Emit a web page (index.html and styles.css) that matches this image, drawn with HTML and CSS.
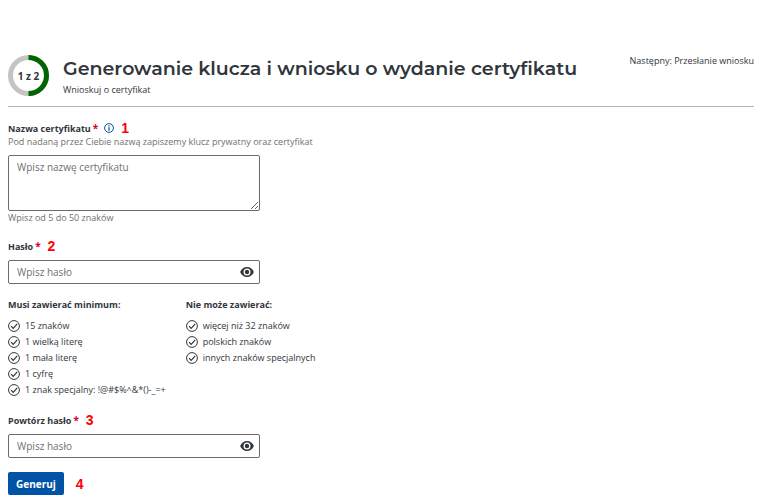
FILE: index.html
```html
<!DOCTYPE html>
<html lang="pl">
<head>
  <meta charset="UTF-8" />
  <meta name="viewport" content="width=device-width, initial-scale=1.0" />
  <title>Wnioskuj o certyfikat</title>
  <link rel="stylesheet" href="styles.css">
</head>
<body>
  <svg class="sprite" aria-hidden="true">
    <symbol id="icon-check" viewBox="0 0 12 12">
      <circle cx="6" cy="6" r="5.4" fill="none" stroke="currentColor" stroke-width="1" />
      <path d="M3 6.200l2.200 2.200 4-4.600" fill="none" stroke="currentColor" stroke-width="1.200" />
    </symbol>
    <symbol id="icon-eye" viewBox="1 1 22 16">
      <path d="M12 1C7 1 2.700 4.300 1 9c1.700 4.700 6 8 11 8s9.300-3.300 11-8c-1.700-4.700-6-8-11-8z" fill="currentColor" />
      <circle cx="12" cy="9" r="5.600" fill="#fff" />
      <circle cx="12" cy="9" r="3.500" fill="currentColor" />
    </symbol>
  </svg>

  <header>
    <div class="progress">
      <svg viewBox="0 0 41 41" aria-hidden="true">
        <circle cx="20.5" cy="20.5" r="18" fill="none" stroke="#c4c4c4" stroke-width="5" />
        <path d="M20.5 2.5a18 18 0 0 1 0 36" fill="none" stroke="#006400" stroke-width="5" />
      </svg>
      <span>1 z 2</span>
    </div>
    <div class="title">
      <h1>Generowanie klucza i wniosku o wydanie certyfikatu</h1>
      <p>Wnioskuj o certyfikat</p>
    </div>
    <p class="next-step">Następny: Przesłanie wniosku</p>
  </header>

  <form>
    <div class="field">
      <div class="label-row">
        <label for="certName">Nazwa certyfikatu<span class="required">*</span></label>
        <svg class="info" viewBox="0 0 10 10" aria-hidden="true">
          <circle cx="5" cy="5" r="4.4" fill="none" stroke="currentColor" stroke-width="1" />
          <path d="M5 2.200v1.200M5 4.300v3.500" stroke="currentColor" stroke-width="1.200" />
        </svg>
        <span class="mark">1</span>
      </div>
      <p class="help">Pod nadaną przez Ciebie nazwą zapiszemy klucz prywatny oraz certyfikat</p>
      <textarea id="certName" placeholder="Wpisz nazwę certyfikatu"></textarea>
      <p class="help">Wpisz od 5 do 50 znaków</p>
    </div>

    <div class="field">
      <div class="label-row">
        <label for="password">Hasło<span class="required">*</span></label>
        <span class="mark">2</span>
      </div>
      <div class="password">
        <input type="password" id="password" placeholder="Wpisz hasło">
        <button type="button" aria-label="Pokaż hasło"><svg><use href="#icon-eye" /></svg></button>
      </div>
    </div>

    <div class="rules">
      <section>
        <h2>Musi zawierać minimum:</h2>
        <ul>
          <li><svg><use href="#icon-check" /></svg>15 znaków</li>
          <li><svg><use href="#icon-check" /></svg>1 wielką literę</li>
          <li><svg><use href="#icon-check" /></svg>1 mała literę</li>
          <li><svg><use href="#icon-check" /></svg>1 cyfrę</li>
          <li><svg><use href="#icon-check" /></svg>1 znak specjalny: !@#$%^&amp;*()-_=+</li>
        </ul>
      </section>
      <section>
        <h2>Nie może zawierać:</h2>
        <ul>
          <li><svg><use href="#icon-check" /></svg>więcej niż 32 znaków</li>
          <li><svg><use href="#icon-check" /></svg>polskich znaków</li>
          <li><svg><use href="#icon-check" /></svg>innych znaków specjalnych</li>
        </ul>
      </section>
    </div>

    <div class="field">
      <div class="label-row">
        <label for="repeatPassword">Powtórz hasło<span class="required">*</span></label>
        <span class="mark">3</span>
      </div>
      <div class="password">
        <input type="password" id="repeatPassword" placeholder="Wpisz hasło">
        <button type="button" aria-label="Pokaż hasło"><svg><use href="#icon-eye" /></svg></button>
      </div>
    </div>

    <div class="actions">
      <button type="submit" class="submit">Generuj</button>
      <span class="mark">4</span>
    </div>
  </form>
</body>
</html>
```

FILE: styles.css
```css
body {
  margin: 0;
  padding: 54px 6px 4px 8px;
  font-family: 'Open Sans', sans-serif;
  font-size: 9px;
  line-height: 14px;
  background-color: #fff;
  color: #30363c;
}

p, h1, h2, ul {
  margin: 0;
  padding: 0;
}

.sprite {
  display: none;
}

header {
  display: flex;
  align-items: flex-start;
  padding-bottom: 9px;
  border-bottom: 1px solid #b4b4b4;
}

.progress {
  display: grid;
  place-items: center;
  margin: 1px 14px 0 0;
  font-size: 10px;
  font-weight: 700;
}

.progress svg,
.progress span {
  grid-area: 1 / 1;
}

.progress svg {
  width: 41px;
  height: 41px;
}

.title {
  flex: 1;
}

h1 {
  font-family: Montserrat, sans-serif;
  font-size: 19px;
  font-weight: 600;
  line-height: 29px;
}

.next-step {
  white-space: nowrap;
}

form {
  padding-top: 14px;
}

.field {
  max-width: 252px;
  margin-bottom: 14px;
}

.label-row {
  display: flex;
  align-items: center;
  height: 14px;
}

label {
  font-weight: 700;
}

.required {
  margin-left: 2px;
  font-size: 10px;
  color: #d6002f;
}

.info {
  width: 10px;
  height: 10px;
  margin-left: 6px;
  color: #0052a5;
}

.mark {
  margin-left: 7px;
  font-family: 'Liberation Sans', Arial, sans-serif;
  font-size: 14px;
  font-weight: 700;
  color: #f00;
}

.help {
  white-space: nowrap;
  color: #707070;
}

textarea,
input {
  display: block;
  box-sizing: border-box;
  width: 100%;
  border: 1px solid #6b6b6b;
  border-radius: 2px;
  background-color: #fff;
  color: inherit;
  font: inherit;
  font-size: 10px;
}

textarea {
  height: 56px;
  margin-top: 6px;
  padding: 4px 8px;
}

input {
  height: 24px;
  padding: 0 30px 0 8px;
}

::placeholder {
  color: #707070;
  opacity: 1;
}

.password {
  position: relative;
  margin-top: 7px;
}

.password button {
  display: flex;
  position: absolute;
  top: 0;
  bottom: 0;
  right: 6px;
  align-items: center;
  padding: 0;
  border: none;
  background: none;
  color: #30363c;
  cursor: pointer;
}

.password svg {
  width: 14px;
  height: 10px;
}

.rules {
  display: flex;
  gap: 20px;
  margin-bottom: 15px;
}

h2 {
  margin-bottom: 6px;
  font-size: 9px;
  font-weight: 700;
  line-height: 14px;
}

ul {
  list-style: none;
}

li {
  display: flex;
  align-items: center;
  line-height: 16px;
}

li svg {
  width: 12px;
  height: 12px;
  margin-right: 5px;
}

.actions {
  display: flex;
  align-items: center;
}

.submit {
  height: 23px;
  padding: 0 8px;
  border: none;
  border-radius: 2px;
  background-color: #0052a5;
  color: #fff;
  font: inherit;
  font-size: 10px;
  font-weight: 700;
  cursor: pointer;
}

.actions .mark {
  margin-left: 12px;
}
```
